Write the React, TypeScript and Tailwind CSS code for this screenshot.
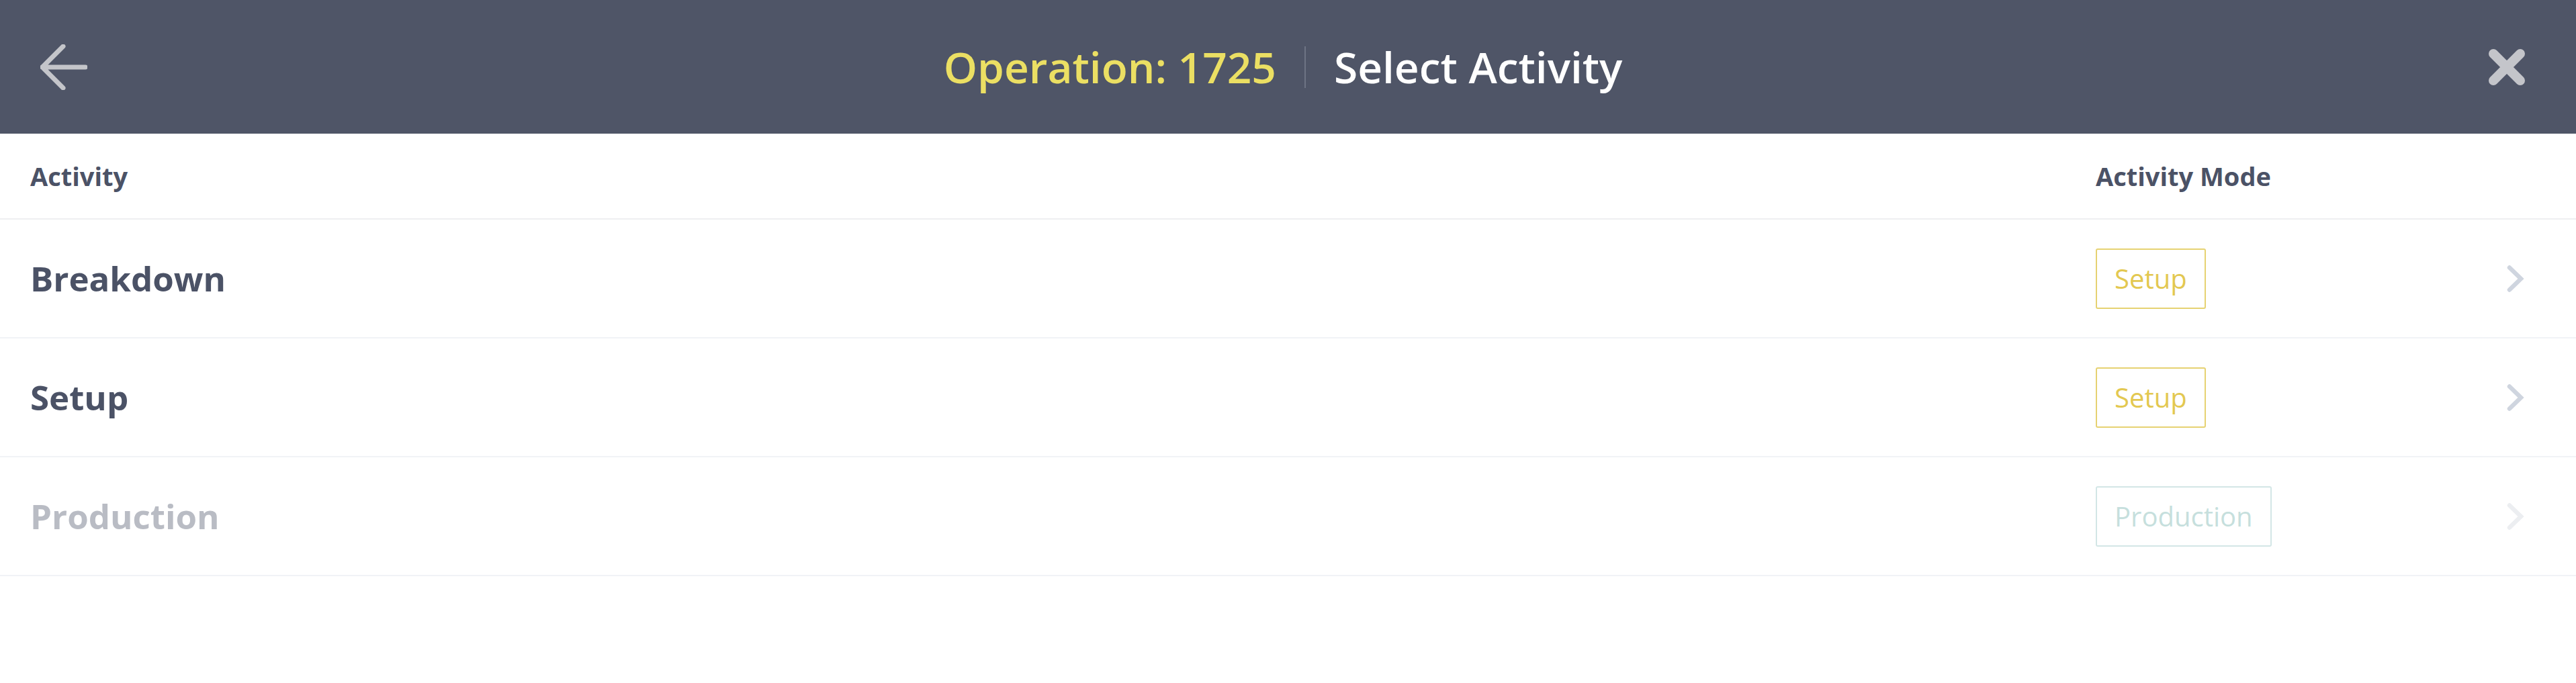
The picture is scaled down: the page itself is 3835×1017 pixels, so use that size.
import React from "react";

const rows = [
  { name: "Breakdown", mode: "Setup", disabled: false },
  { name: "Setup", mode: "Setup", disabled: false },
  { name: "Production", mode: "Production", disabled: true },
];

function Chevron({ color }: { color: string }) {
  return (
    <svg width="26" height="40" viewBox="0 0 26 40" fill="none">
      <path d="M4 3.5 L21 20 L4 36.5" stroke={color} strokeWidth="6.5" strokeLinecap="round" strokeLinejoin="miter" />
    </svg>
  );
}

export default function App() {
  return (
    <div className="w-[3835px] h-[1017px] bg-white" style={{ fontFamily: '"Open Sans", "Noto Sans", sans-serif' }}>
      <div className="h-[199px] bg-[#4f5567] flex items-center pl-[60px] pr-[75px]">
        <div className="w-[70px] flex items-center">
          <svg width="70" height="68" viewBox="0 0 70 68" fill="none">
            <path d="M34 3 L3 34 L34 65 M3 34 L67 34" stroke="#c4c5ca" strokeWidth="7" strokeLinecap="round" strokeLinejoin="round" />
          </svg>
        </div>
        <div className="flex-1 flex items-center justify-center">
          <span className="text-[64px] font-semibold text-[#ebdf63] leading-none">Operation: 1725</span>
          <span className="mx-[42px] w-[2px] h-[62px] bg-[#6e7485]" />
          <span className="text-[64px] font-semibold text-white leading-none">Select Activity</span>
        </div>
        <div className="w-[70px] flex items-center justify-end">
          <svg width="56" height="56" viewBox="0 0 56 56" fill="none">
            <path d="M8 8 L48 48 M48 8 L8 48" stroke="#c4c5ca" strokeWidth="14" strokeLinecap="round" />
          </svg>
        </div>
      </div>

      <div className="flex items-center h-[128px] pl-[45px] pr-[77px] border-b-2 border-[#eeeff1] text-[38px] font-bold text-[#4b5266]">
        <div className="flex-1">Activity</div>
        <div className="w-[638px]">Activity Mode</div>
      </div>

      {rows.map((r) => (
        <div key={r.name} className="flex items-center h-[177px] pl-[45px] pr-[77px] border-b-2 border-[#f1f3f6]">
          <div className={`flex-1 text-[51px] font-bold ${r.disabled ? "text-[#b9bcc4]" : "text-[#4b5266]"}`}>{r.name}</div>
          <div className="w-[612px]">
            <span
              className={`inline-flex items-center h-[90px] px-[26px] border-2 rounded-[3px] text-[40px] ${
                r.disabled ? "border-[#d3e6e6] text-[#c6dfdd]" : "border-[#e6d272] text-[#e3c851]"
              }`}
            >
              {r.mode}
            </span>
          </div>
          <Chevron color={r.disabled ? "#eceef1" : "#cfd5df"} />
        </div>
      ))}
    </div>
  );
}
